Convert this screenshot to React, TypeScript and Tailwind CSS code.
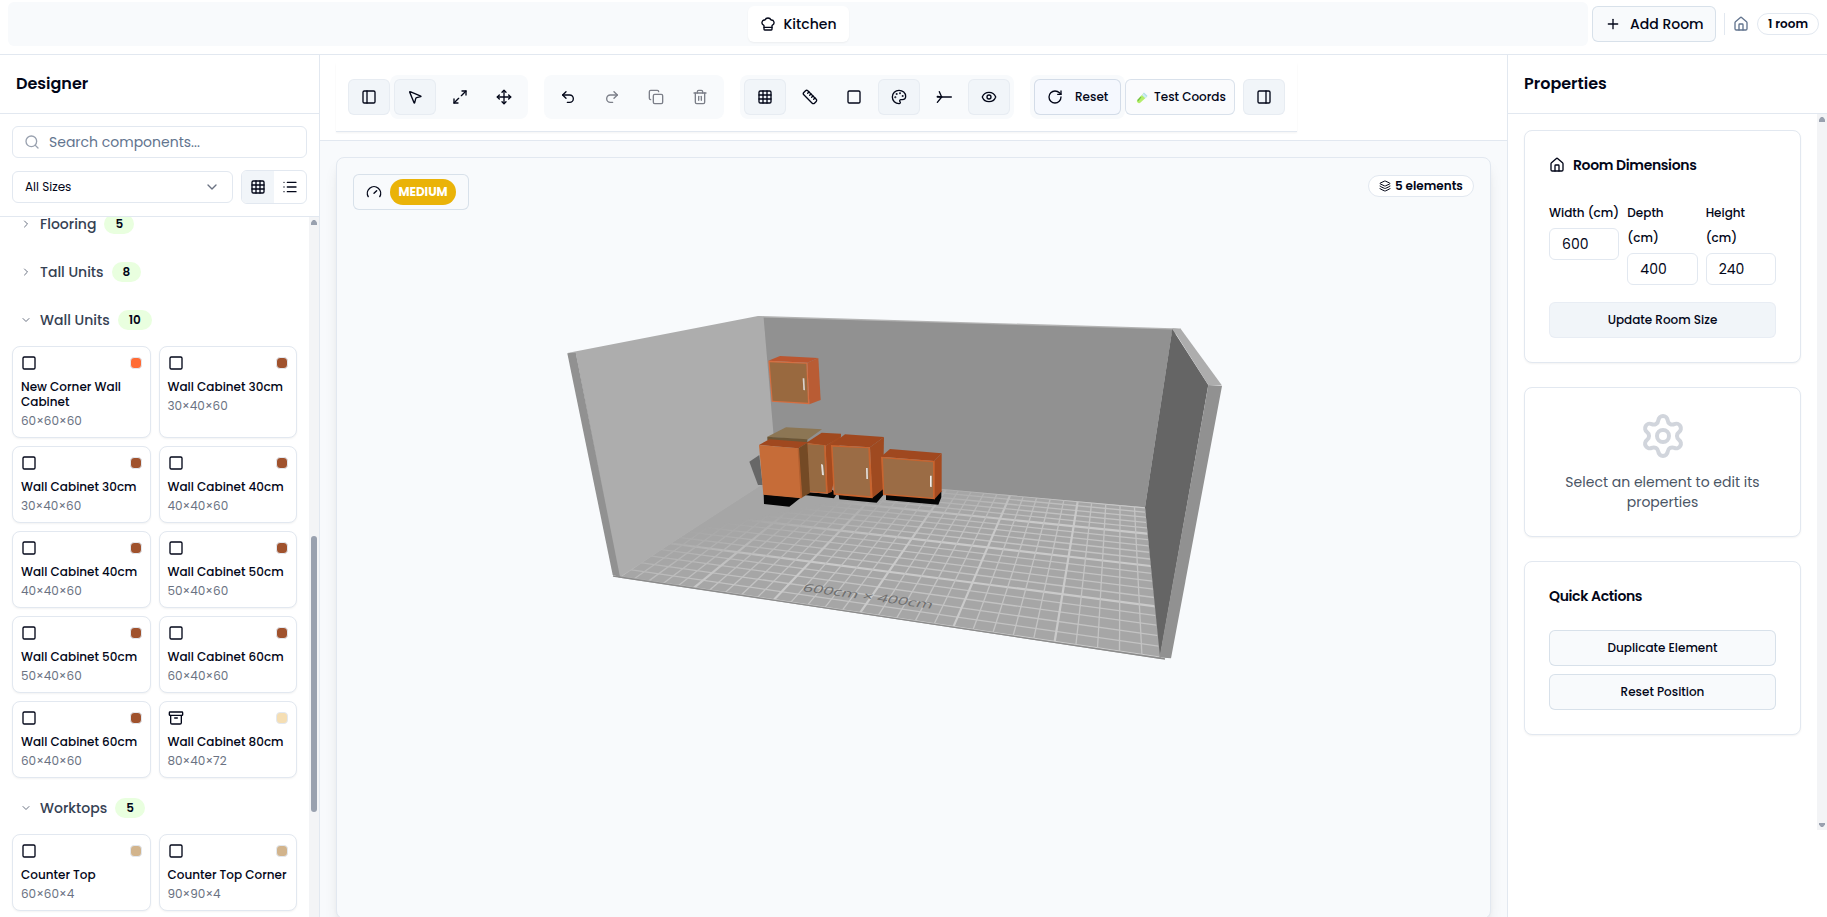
import type { ComponentType, ReactNode } from "react";
import {
  Archive,
  ChefHat,
  ChevronDown,
  ChevronRight,
  Copy,
  Eye,
  Gauge,
  Grid3x3,
  House,
  Layers,
  List,
  Maximize2,
  MousePointer2,
  Move,
  Palette,
  PanelLeft,
  PanelRight,
  Plus,
  Redo2,
  RotateCw,
  Ruler,
  Search,
  Settings,
  Square,
  Trash2,
  Undo2,
} from "lucide-react";

type Icon = ComponentType<{ className?: string }>;

/* ---------- Header ---------- */

function Header() {
  return (
    <header className="flex h-[55px] shrink-0 items-start border-b border-slate-200 bg-white pl-2">
      <div className="mt-[2px] flex h-11 w-[1580px] items-center justify-center rounded-md bg-slate-50">
        <div className="flex h-9 w-[101px] items-center rounded-md bg-white pl-3 shadow-xs">
          <ChefHat className="size-4" />
          <span className="ml-2 text-sm font-medium">Kitchen</span>
        </div>
      </div>
      <div className="ml-1 mt-[6px] flex h-9 w-[124px] items-center rounded-md border border-slate-300/70 bg-slate-50 pl-3">
        <Plus className="size-4" />
        <span className="ml-[9px] text-sm font-medium">Add Room</span>
      </div>
      <div className="ml-2 mt-[13px] h-[22px] w-px bg-slate-200" />
      <House className="ml-[8px] mt-4 size-4 text-slate-500" />
      <div className="ml-2 mt-[13px] flex h-[22px] w-[62px] items-center justify-center rounded-full border border-slate-200 text-xs font-semibold">
        1 room
      </div>
    </header>
  );
}

/* ---------- Component library ---------- */

type Item = { name: string; size: string; swatch: string; icon?: Icon };

const WALL_UNITS: Item[] = [
  { name: "New Corner Wall Cabinet", size: "60×60×60", swatch: "bg-[#ff6b35]" },
  { name: "Wall Cabinet 30cm", size: "30×40×60", swatch: "bg-[#a0522d]" },
  { name: "Wall Cabinet 30cm", size: "30×40×60", swatch: "bg-[#a0522d]" },
  { name: "Wall Cabinet 40cm", size: "40×40×60", swatch: "bg-[#a0522d]" },
  { name: "Wall Cabinet 40cm", size: "40×40×60", swatch: "bg-[#a0522d]" },
  { name: "Wall Cabinet 50cm", size: "50×40×60", swatch: "bg-[#a0522d]" },
  { name: "Wall Cabinet 50cm", size: "50×40×60", swatch: "bg-[#a0522d]" },
  { name: "Wall Cabinet 60cm", size: "60×40×60", swatch: "bg-[#a0522d]" },
  { name: "Wall Cabinet 60cm", size: "60×40×60", swatch: "bg-[#a0522d]" },
  { name: "Wall Cabinet 80cm", size: "80×40×72", swatch: "bg-[#f5deb3]", icon: Archive },
];

const WORKTOPS: Item[] = [
  { name: "Counter Top", size: "60×60×4", swatch: "bg-[#d2b48c]" },
  { name: "Counter Top Corner", size: "90×90×4", swatch: "bg-[#d2b48c]" },
];

function ItemCard({ name, size, swatch, icon: Glyph = Square }: Item) {
  return (
    <div className="min-h-[77px] rounded-lg border border-slate-200 bg-white px-2 pt-2 pb-[7px] shadow-xs">
      <div className="flex items-center justify-between">
        <Glyph className="size-4" />
        <span className={`size-3 rounded border border-slate-200 ${swatch}`} />
      </div>
      <div className="mt-2 text-xs leading-[15px] font-medium">{name}</div>
      <div className="mt-[3px] text-xs leading-[18px] text-gray-500">{size}</div>
    </div>
  );
}

function Section({ name, count, items }: { name: string; count: number; items?: Item[] }) {
  const Chevron = items ? ChevronDown : ChevronRight;
  return (
    <section>
      <div className="flex h-9 items-center pl-2">
        <Chevron className="size-3 text-gray-500" />
        <span className="ml-2 text-sm font-medium text-gray-700">{name}</span>
        <span className="ml-2 flex h-5 items-center rounded-full bg-[#e9ffdf] px-[11px] text-xs font-semibold">{count}</span>
      </div>
      {items && (
        <div className="mt-2 grid grid-cols-2 gap-2">
          {items.map((item, i) => (
            <ItemCard key={i} {...item} />
          ))}
        </div>
      )}
    </section>
  );
}

function ScrollArrow({ down = false }: { down?: boolean }) {
  return (
    <svg viewBox="0 0 10 10" className="size-[10px] text-gray-400">
      <path fill="currentColor" d={down ? "M2 3h6v1.5L6 7H4L2 4.500z" : "M4 3h2l2 2.500V8H2V5.500z"} />
    </svg>
  );
}

function Library() {
  return (
    <aside className="flex w-80 shrink-0 flex-col border-r border-slate-200 bg-white">
      <div className="flex h-[59px] shrink-0 items-center border-b border-slate-200 px-4">
        <h2 className="text-base font-semibold">Designer</h2>
      </div>
      <div className="h-[103px] shrink-0 border-b border-slate-200 px-3 pt-3">
        <div className="flex h-8 items-center rounded-md border border-slate-200 pb-px pl-[11px]">
          <Search className="mt-px size-4 text-gray-400" />
          <span className="ml-[9px] text-sm text-slate-500">Search components...</span>
        </div>
        <div className="mt-3 flex items-center gap-2">
          <div className="flex h-8 w-[221px] items-center justify-between rounded-md border border-slate-200 px-3 text-xs">
            <span className="text-xs">All Sizes</span>
            <ChevronDown className="size-4 text-gray-500" />
          </div>
          <div className="flex h-[34px] w-[66px] overflow-hidden rounded-md border border-slate-200">
            <div className="flex flex-1 items-center justify-center bg-slate-100">
              <Grid3x3 className="size-4" />
            </div>
            <div className="flex flex-1 items-center justify-center">
              <List className="size-4" />
            </div>
          </div>
        </div>
      </div>
      <div className="flex min-h-0 flex-1">
        <div className="flex min-w-0 flex-1 flex-col justify-start overflow-hidden pr-3 pl-3">
          <div className="-mt-[11px] flex flex-col gap-3">
            <Section name="Flooring" count={5} />
            <Section name="Tall Units" count={8} />
            <Section name="Wall Units" count={10} items={WALL_UNITS} />
            <Section name="Worktops" count={5} items={WORKTOPS} />
          </div>
        </div>
        <div className="flex w-[10px] flex-col items-center bg-gray-100">
          <ScrollArrow />
          <div className="mt-[309px] h-[276px] w-[6px] rounded-full bg-gray-400" />
        </div>
      </div>
    </aside>
  );
}

/* ---------- Toolbar ---------- */

function Tool({ icon: Glyph, active = false, faded = false }: { icon: Icon; active?: boolean; faded?: boolean }) {
  return (
    <div
      className={
        active
          ? "flex h-9 w-[42px] items-center justify-center rounded-md border border-slate-200/70 bg-slate-100"
          : "flex h-9 w-10 items-center justify-center rounded-md"
      }
    >
      <Glyph className={faded ? "size-4 opacity-50" : "size-4"} />
    </div>
  );
}

function AxisIcon({ className }: { className?: string }) {
  return (
    <svg viewBox="0 0 24 24" fill="none" stroke="currentColor" strokeWidth="2" strokeLinecap="round" strokeLinejoin="round" className={className}>
      <path d="M2 12h21" />
      <path d="M5 4l3.500 8L2 20" />
      <path d="M2 11l6.500 1" />
    </svg>
  );
}

function TestTubeIcon() {
  return (
    <svg viewBox="0 0 14 14" className="size-[13px]">
      <path d="M8.500 1.500l4 4-1.500 1-3.500-3.500z" fill="#a9d8f7" />
      <path d="M8 2.500l3.700 3.700-6.800 6.300a2.200 2.200 0 0 1-3.200-3.200z" fill="#b4ee6a" />
      <path d="M5 5.800l.8.8-3.600 4.700a2 2 0 0 1-.5-1.800z" fill="#6fbf45" />
      <path d="M8 2.500l3.700 3.700-1.700 1.600-3.700-3.600z" fill="#cdebfb" />
    </svg>
  );
}

function Group({ children, className = "" }: { children: ReactNode; className?: string }) {
  return <div className={`flex h-11 items-center gap-1 rounded-lg bg-slate-50 px-1 ${className}`}>{children}</div>;
}

function Toolbar() {
  return (
    <div className="h-[86px] shrink-0 border-b border-slate-200 bg-white px-4 pt-2">
      <div className="flex h-[69px] w-[961px] items-center border-b border-slate-200 px-3 shadow-xs">
        <Tool icon={PanelLeft} active />
        <Group>
          <Tool icon={MousePointer2} active />
          <Tool icon={Maximize2} />
          <Tool icon={Move} />
        </Group>
        <Group className="ml-4">
          <Tool icon={Undo2} />
          <Tool icon={Redo2} faded />
          <Tool icon={Copy} faded />
          <Tool icon={Trash2} faded />
        </Group>
        <Group className="ml-4">
          <Tool icon={Grid3x3} active />
          <Tool icon={Ruler} />
          <Tool icon={Square} />
          <Tool icon={Palette} active />
          <Tool icon={AxisIcon} />
          <Tool icon={Eye} active />
        </Group>
        <Group className="ml-4">
          <div className="flex h-9 w-[87px] items-center rounded-md border border-slate-300/80 bg-[#f5f8fe] pl-3">
            <RotateCw className="size-4" />
            <span className="ml-3 text-xs font-medium">Reset</span>
          </div>
        </Group>
        <div className="flex h-9 w-[110px] items-center rounded-md border border-slate-300/70 bg-slate-50/70 pl-[10px]">
          <TestTubeIcon />
          <span className="ml-[5px] text-xs font-medium">Test Coords</span>
        </div>
        <div className="ml-2">
          <Tool icon={PanelRight} active />
        </div>
      </div>
    </div>
  );
}

/* ---------- 3D scene ---------- */

type Pt = [number, number];

const BACK_LEFT: Pt = [773, 473];
const BACK_RIGHT: Pt = [1149, 507.6];
const FRONT_RIGHT: Pt = [1164.7, 658.4];
const FRONT_LEFT: Pt = [619, 577];

/* Projects floor coordinates (0..1 across, 0..1 towards the viewer) to the screen. */
function project(u: number, v: number): Pt {
  const [x0, y0] = BACK_LEFT;
  const [x1, y1] = BACK_RIGHT;
  const [x2, y2] = FRONT_RIGHT;
  const [x3, y3] = FRONT_LEFT;
  const dx1 = x1 - x2, dx2 = x3 - x2, dx3 = x0 - x1 + x2 - x3;
  const dy1 = y1 - y2, dy2 = y3 - y2, dy3 = y0 - y1 + y2 - y3;
  const det = dx1 * dy2 - dx2 * dy1;
  const g = (dx3 * dy2 - dx2 * dy3) / det;
  const h = (dx1 * dy3 - dx3 * dy1) / det;
  const w = g * u + h * v + 1;
  return [
    ((x1 - x0 + g * x1) * u + (x3 - x0 + h * x3) * v + x0) / w,
    ((y1 - y0 + g * y1) * u + (y3 - y0 + h * y3) * v + y0) / w,
  ];
}

function GridLine({ from, to, major }: { from: Pt; to: Pt; major: boolean }) {
  return (
    <line
      x1={from[0]}
      y1={from[1]}
      x2={to[0]}
      y2={to[1]}
      stroke={major ? "#cacaca" : "#c3c3c3"}
      strokeWidth={major ? 2.2 : 1.3}
    />
  );
}

function Cabinets() {
  return (
    <g transform="translate(730 340) scale(0.33333)">
      <polygon points="115,62 150,48 265,54 232,68" fill="#bb5630" />
      <polygon points="232,68 265,54 272,180 238,193" fill="#b95c34" />
      <polygon points="115,62 232,68 238,193 125,185" fill="#d66e40" />
      <polygon points="119,67 229,71 234,188 128,182" fill="#99693f" />
      <polygon points="218,115 223,115 225,151 220,150" fill="#d9d4cf" />

      <polygon points="58,365 88,345 98,435 84,435" fill="#676767" />

      <polygon points="228,456 292,461 308,449 320,462 312,475 228,466" fill="#050505" />
      <polygon points="228,309 275,278 333,281 333,290 287,317" fill="#a0491f" />
      <polygon points="287,317 333,287 306,455 292,461" fill="#a54b1f" />
      <polygon points="230,309 287,316 293,461 232,456" fill="#c8642f" />
      <polygon points="232,313 282,316 288,457 236,454" fill="#966a42" />
      <polygon points="273,372 279,374 282,406 276,405" fill="#e2dedb" />

      <polygon points="112,290 168,262 276,268 232,299" fill="#8c7654" />
      <polygon points="112,290 232,298 232,308 112,301" fill="#6c5636" />
      <polygon points="101,463 212,473 178,500 102,492" fill="#050505" />
      <polygon points="87,315 118,298 236,307 205,325" fill="#a0481f" />
      <polygon points="205,325 232,308 240,459 212,475" fill="#744a25" />
      <polygon points="87,315 205,325 214,475 100,464" fill="#c66c38" />
      <polygon points="203,325 207,325 217,473 212,475" fill="#b25f2f" />

      <polygon points="326,464 428,472 461,444 463,461 440,488 328,478" fill="#050505" />
      <polygon points="303,315 345,283 462,291 420,322" fill="#a0481f" />
      <polygon points="420,322 462,291 459,448 426,475" fill="#9f4a20" />
      <polygon points="303,315 420,322 428,475 311,464" fill="#c8642f" />
      <polygon points="308,320 415,325 421,469 315,460" fill="#9b6c45" />
      <polygon points="408,384 413,384 414,417 409,417" fill="#e2dedb" />

      <polygon points="468,463 612,474 634,452 634,472 625,494 468,480" fill="#050505" />
      <polygon points="453,350 480,327 635,340 612,363" fill="#a0481f" />
      <polygon points="612,363 635,340 635,454 612,479" fill="#a54b20" />
      <polygon points="453,350 614,363 614,478 459,465" fill="#c8642f" />
      <polygon points="459,355 609,367 609,473 463,461" fill="#9b6c45" />
      <polygon points="600,407 605,407 605,441 600,440" fill="#f0eeec" />
    </g>
  );
}

function Scene() {
  const columns = Array.from({ length: 31 }, (_, i) => i);
  const rows = Array.from({ length: 21 }, (_, i) => i);
  return (
    <svg viewBox="337 158 1152 760" className="absolute top-0 left-0 h-[760px] w-[1152px]">
      <defs>
        <linearGradient id="fade" gradientUnits="userSpaceOnUse" x1="800" y1="508" x2="812" y2="568">
          <stop offset="0" stopColor="#000" />
          <stop offset="0.6" stopColor="#bbb" />
          <stop offset="1" stopColor="#fff" />
        </linearGradient>
        <mask id="fadeMask" maskUnits="userSpaceOnUse" x="560" y="420" width="660" height="260">
          <rect x="560" y="420" width="660" height="260" fill="url(#fade)" />
        </mask>
        <clipPath id="floor">
          <polygon points="619,577 777,474 1145,507.300 1159.500,657.500" />
        </clipPath>
      </defs>
      <polygon points="758,316 1181,328.500 1181,334 763,322" fill="#b4b4b4" />
      <polygon points="763,317.500 1172.300,329.500 1145,507.500 775,476" fill="#919191" />
      <polygon points="618,577.500 777,474 1145,507.300 1161,659" fill="#a6a6a6" />
      <g clipPath="url(#floor)">
        <g mask="url(#fadeMask)">
          {rows.map((r) => (
            <GridLine key={r} from={project(0, r / 20)} to={project(1, r / 20)} major={r % 5 === 0} />
          ))}
          {columns.map((c) => (
            <GridLine key={c} from={project(c / 30, 0)} to={project(c / 30, 1)} major={c % 5 === 0} />
          ))}
        </g>
      </g>
      <polygon points="567.300,353 758,316 763.500,316.500 777,475 619,577.500 575.700,352.500" fill="#adadad" />
      <polygon points="567.300,353.300 575.700,352.300 620,577 612.700,575" fill="#919191" />
      <line x1="613" y1="576" x2="1165" y2="659" stroke="#8b8b8b" strokeWidth="1.300" />
      <polygon points="1172.300,329 1208.300,385 1160,657 1145,507.300" fill="#656565" />
      <polygon points="1172.300,328.300 1181,329.300 1222,385.500 1208.300,385" fill="#adadad" />
      <polygon points="1208.300,385 1222,386 1171,658.300 1159.500,657.500" fill="#919191" />
      <text
        transform="matrix(0.99 0.137 -0.3 0.58 801.500 590.900)"
        fontSize="18"
        textLength="131"
        lengthAdjust="spacingAndGlyphs"
        fill="#6e6e6e"
        className="font-['Open_Sans',sans-serif]"
      >
        600cm × 400cm
      </text>
      <Cabinets />
    </svg>
  );
}

function Viewport() {
  return (
    <div className="min-h-0 flex-1 bg-slate-50 px-4 pt-4">
      <div className="relative h-[762px] w-[1155px] rounded-lg border border-slate-200 bg-slate-50 shadow-lg">
        <Scene />
        <div className="absolute top-4 left-4 flex h-9 w-[116px] items-center rounded-md border border-slate-300/70 bg-slate-50 pl-3">
          <Gauge className="size-4" />
          <span className="ml-2 flex h-[26px] w-[66px] items-center justify-center rounded-full bg-[#eab308] text-xs font-bold text-white">
            MEDIUM
          </span>
        </div>
        <div className="absolute top-[17px] right-4 flex h-[22px] w-[106px] items-center rounded-full border border-slate-200 bg-white pl-[10px] text-xs font-semibold">
          <Layers className="size-3" />
          <span className="ml-1">5 elements</span>
        </div>
      </div>
    </div>
  );
}

/* ---------- Properties ---------- */

function Field({ label, value }: { label: string; value: string }) {
  return (
    <div>
      <div className="pb-[3px] text-xs leading-[25px] font-medium">{label}</div>
      <div className="flex h-8 items-center rounded-md border border-slate-200 pl-3 text-sm">{value}</div>
    </div>
  );
}

function Card({ children, className }: { children: ReactNode; className: string }) {
  return <div className={`w-[277px] rounded-lg border border-slate-200 bg-white px-6 shadow-xs ${className}`}>{children}</div>;
}

function Properties() {
  return (
    <aside className="flex w-80 shrink-0 flex-col border-l border-slate-200 bg-white">
      <div className="flex h-[59px] shrink-0 items-center border-b border-slate-200 px-4">
        <h2 className="text-base font-semibold">Properties</h2>
      </div>
      <div className="flex h-[716px]">
        <div className="flex flex-1 flex-col gap-6 pt-4 pl-4">
          <Card className="h-[233px] pt-6">
            <div className="flex h-5 items-center">
              <House className="size-4" />
              <span className="ml-2 text-sm font-semibold tracking-tight">Room Dimensions</span>
            </div>
            <div className="mt-[25px] grid h-[86px] grid-cols-3 gap-2">
              <Field label="Width (cm)" value="600" />
              <Field label="Depth (cm)" value="400" />
              <Field label="Height (cm)" value="240" />
            </div>
            <div className="mt-4 flex h-9 items-center justify-center rounded-md border border-slate-200/60 bg-slate-100 text-xs font-medium">
              Update Room Size
            </div>
          </Card>
          <Card className="h-[150px] pt-6">
            <Settings className="mx-auto size-12 text-gray-300" />
            <p className="mt-3 text-center text-sm leading-5 text-gray-600">Select an element to edit its properties</p>
          </Card>
          <Card className="h-[174px] pt-6">
            <div className="flex h-5 items-center text-sm font-semibold tracking-tight">Quick Actions</div>
            <div className="mt-6 flex h-9 items-center justify-center rounded-md border border-slate-300/70 bg-slate-50 text-xs font-medium">
              Duplicate Element
            </div>
            <div className="mt-2 flex h-9 items-center justify-center rounded-md border border-slate-300/70 bg-slate-50 text-xs font-medium">
              Reset Position
            </div>
          </Card>
        </div>
        <div className="flex w-[10px] flex-col justify-between bg-gray-100">
          <ScrollArrow />
          <ScrollArrow down />
        </div>
      </div>
    </aside>
  );
}

export default function App() {
  return (
    <div className="flex h-[917px] w-[1827px] flex-col overflow-hidden bg-white font-['Poppins','Inter',sans-serif] text-slate-950">
      <Header />
      <div className="flex min-h-0 flex-1">
        <Library />
        <main className="flex min-w-0 flex-1 flex-col overflow-hidden">
          <Toolbar />
          <Viewport />
        </main>
        <Properties />
      </div>
    </div>
  );
}
